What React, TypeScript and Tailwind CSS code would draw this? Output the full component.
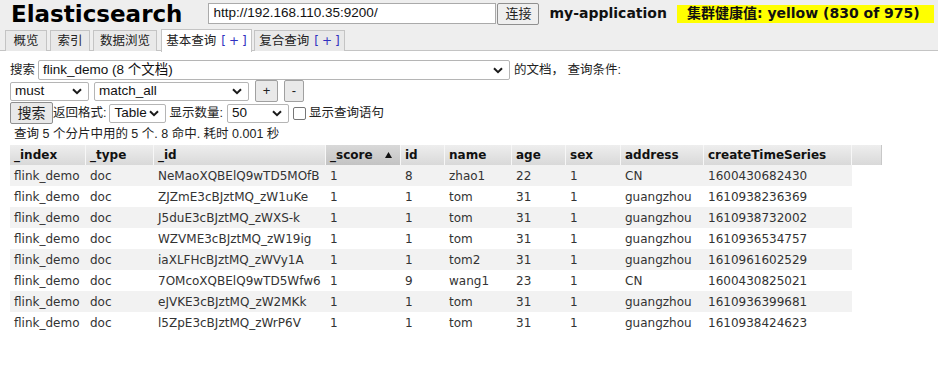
import React from "react";

const verdana = "font-['DejaVu_Sans','Noto_Sans_CJK_SC',sans-serif]";
const arial = "font-['Liberation_Sans','Noto_Sans_CJK_SC',sans-serif]";

type Row = string[];

const columns = [
  { key: "_index", w: 76 },
  { key: "_type", w: 68 },
  { key: "_id", w: 172 },
  { key: "_score", w: 75, sorted: true },
  { key: "id", w: 44 },
  { key: "name", w: 67 },
  { key: "age", w: 54 },
  { key: "sex", w: 55 },
  { key: "address", w: 83 },
  { key: "createTimeSeries", w: 148 },
];

const rows: Row[] = [
  ["flink_demo", "doc", "NeMaoXQBElQ9wTD5MOfB", "1", "8", "zhao1", "22", "1", "CN", "1600430682430"],
  ["flink_demo", "doc", "ZJZmE3cBJztMQ_zW1uKe", "1", "1", "tom", "31", "1", "guangzhou", "1610938236369"],
  ["flink_demo", "doc", "J5duE3cBJztMQ_zWXS-k", "1", "1", "tom", "31", "1", "guangzhou", "1610938732002"],
  ["flink_demo", "doc", "WZVME3cBJztMQ_zW19ig", "1", "1", "tom", "31", "1", "guangzhou", "1610936534757"],
  ["flink_demo", "doc", "iaXLFHcBJztMQ_zWVy1A", "1", "1", "tom2", "31", "1", "guangzhou", "1610961602529"],
  ["flink_demo", "doc", "7OMcoXQBElQ9wTD5Wfw6", "1", "9", "wang1", "23", "1", "CN", "1600430825021"],
  ["flink_demo", "doc", "eJVKE3cBJztMQ_zW2MKk", "1", "1", "tom", "31", "1", "guangzhou", "1610936399681"],
  ["flink_demo", "doc", "l5ZpE3cBJztMQ_zWrP6V", "1", "1", "tom", "31", "1", "guangzhou", "1610938424623"],
];

function Chevron() {
  return (
    <svg width="10" height="7" viewBox="0 0 10 7" className="shrink-0">
      <path d="M1 1.2L5 5.2L9 1.2" fill="none" stroke="#1a1a1a" strokeWidth="2" />
    </svg>
  );
}

function FakeSelect({ value, className }: { value: string; className: string }) {
  return (
    <div
      className={`flex items-center justify-between bg-white border border-[#b5b5b5] rounded-[2px] pl-[4px] pr-[6px] text-[13.5px] text-[#111] ${arial} ${className}`}
    >
      <span className="whitespace-nowrap leading-[16px]">{value}</span>
      <Chevron />
    </div>
  );
}

function Tab({ label, plus, w, active }: { label: string; plus?: boolean; w: string; active?: boolean }) {
  return (
    <div
      className={`${w} flex items-center justify-center border border-b-0 border-[#c4c4c4] text-[12.5px] text-[#222] ${arial} ${
        active ? "bg-white h-[23px] mb-[-1px]" : "bg-[#e9e9e9] h-[21px]"
      }`}
    >
      {label}
      {plus && (
        <span className={`ml-[5px] text-[12px] tracking-[3px] mr-[-3px] text-[#3030c0] ${verdana}`}>[+]</span>
      )}
    </div>
  );
}

export default function App() {
  return (
    <div className="w-[938px] h-[390px] bg-white overflow-hidden">
      {/* header */}
      <div className="bg-[#eeeeee] border-b border-[#c4c4c4] h-[51px]">
        <div className="flex items-center h-[27px]">
          <div className={`ml-[11px] pt-[2px] text-[23px] leading-[27px] font-bold text-black ${verdana}`}>
            Elasticsearch
          </div>
          <div
            className={`ml-[26px] w-[288px] h-[21px] bg-white border border-[#aaaaaa] flex items-center pl-[4px] text-[13.5px] text-[#111] ${arial}`}
          >
            http://192.168.110.35:9200/
          </div>
          <button
            className={`ml-[1px] w-[42px] h-[22px] bg-[#efefef] border border-[#8f8f8f] rounded-[2px] text-[13px] text-[#222] ${arial}`}
          >
            连接
          </button>
          <div className={`ml-[10px] text-[14px] font-bold text-[#111] ${verdana}`}>my-application</div>
          <div
            className={`ml-[10px] h-[18px] w-[257px] bg-[#ffff00] flex items-center pl-[10px] text-[14px] font-bold text-[#111] ${verdana}`}
          >
            集群健康值: yellow (830 of 975)
          </div>
        </div>
        <div className="flex items-end h-[23px] pl-[5px] mt-[1px]">
          <Tab label="概览" w="w-[42px]" />
          <div className="ml-[3px]">
            <Tab label="索引" w="w-[40px]" />
          </div>
          <div className="ml-[3px]">
            <Tab label="数据浏览" w="w-[64px]" />
          </div>
          <div className="ml-[4px]">
            <Tab label="基本查询" plus w="w-[91px]" active />
          </div>
          <div className="ml-[2px]">
            <Tab label="复合查询" plus w="w-[91px]" />
          </div>
        </div>
      </div>

      {/* query form */}
      <div className={`pl-[10px] text-[12.5px] text-[#222] ${arial}`}>
        <div className="flex items-center h-[20px] mt-[9px]">
          <span>搜索</span>
          <FakeSelect value="flink_demo (8 个文档)" className="ml-[3px] w-[472px] h-[20px]" />
          <span className="ml-[4px]">的文档， 查询条件:</span>
        </div>
        <div className="flex items-center h-[22px]">
          <FakeSelect value="must" className="w-[79px] h-[19px]" />
          <FakeSelect value="match_all" className="ml-[5px] w-[155px] h-[19px]" />
          <button className="ml-[6px] w-[23px] h-[22px] bg-[#e9e9e9] border border-[#a0a0a0] rounded-[2px] text-[13px] text-[#222]">
            +
          </button>
          <button className="ml-[6px] w-[20px] h-[22px] bg-[#e9e9e9] border border-[#a0a0a0] rounded-[2px] text-[13px] text-[#222]">
            -
          </button>
        </div>
        <div className="flex items-center h-[22px]">
          <button className="w-[43px] h-[22px] bg-[#e9e9e9] border border-[#8f8f8f] rounded-[2px] text-[14px] text-[#222]">
            搜索
          </button>
          <span>返回格式:</span>
          <FakeSelect value="Table" className="ml-[3px] w-[57px] h-[19px]" />
          <span className="ml-[3px]">显示数量:</span>
          <FakeSelect value="50" className="ml-[4px] w-[62px] h-[19px]" />
          <div className="ml-[4px] w-[13px] h-[13px] bg-white border border-[#767676] rounded-[2px]" />
          <span className="ml-[3px]">显示查询语句</span>
        </div>
        <div className="flex items-center h-[21px] pl-[4px]">查询 5 个分片中用的 5 个. 8 命中. 耗时 0.001 秒</div>

        {/* results table */}
        <table className={`border-collapse table-fixed w-[872px] text-[12px] ${verdana}`}>
          <colgroup>
            {columns.map((c) => (
              <col key={c.key} style={{ width: c.w }} />
            ))}
            <col style={{ width: 30 }} />
          </colgroup>
          <thead>
            <tr>
              {columns.map((c) => (
                <th
                  key={c.key}
                  className={`h-[20px] p-0 pl-[4px] text-left font-bold text-[#111] whitespace-nowrap bg-linear-to-b shadow-[inset_-1px_0_0_#f7f7f7] ${
                    c.sorted ? "from-[#d9d9d9] to-[#c3c3c3]" : "from-[#eeeeee] to-[#d9d9d9]"
                  }`}
                >
                  {c.key}
                  {c.sorted && (
                    <svg width="7" height="6" viewBox="0 0 7 6" className="inline-block ml-[12px] mb-[1px]">
                      <path d="M3.5 0L7 6H0Z" fill="#111" />
                    </svg>
                  )}
                </th>
              ))}
              <th className="h-[20px] p-0 bg-linear-to-b from-[#eeeeee] to-[#d9d9d9] shadow-[inset_-1px_0_0_#c8c8c8]" />
            </tr>
          </thead>
          <tbody>
            {rows.map((r, i) => (
              <tr key={i}>
                {r.map((v, j) => (
                  <td
                    key={j}
                    className={`h-[21px] p-0 pl-[4px] text-[#333] whitespace-nowrap ${i % 2 === 0 ? "bg-[#f2f2f2]" : "bg-white"}`}
                  >
                    {v}
                  </td>
                ))}
              </tr>
            ))}
          </tbody>
        </table>
      </div>
    </div>
  );
}
